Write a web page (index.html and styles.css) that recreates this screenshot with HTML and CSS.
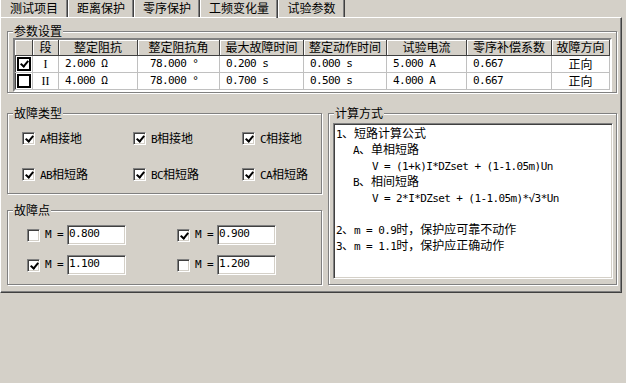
FILE: index.html
```html
<!DOCTYPE html>
<html lang="zh-CN">
<head>
    <meta charset="UTF-8">
    <title>工频变化量</title>
    <link rel="stylesheet" href="styles.css">
</head>
<body>
    <div class="tabs">
        <div class="tab w68">测试项目</div>
        <div class="tab w66">距离保护</div>
        <div class="tab w66">零序保护</div>
        <div class="tab w78 active">工频变化量</div>
        <div class="tab w67">试验参数</div>
    </div>

    <div class="panel">
        <div class="group params">
            <div class="group-title">参数设置</div>
            <div class="grid">
                <div class="th"></div>
                <div class="th">段</div>
                <div class="th">整定阻抗</div>
                <div class="th">整定阻抗角</div>
                <div class="th">最大故障时间</div>
                <div class="th">整定动作时间</div>
                <div class="th">试验电流</div>
                <div class="th">零序补偿系数</div>
                <div class="th">故障方向</div>

                <div class="td center"><span class="tcb on"></span></div>
                <div class="td center roman">I</div>
                <div class="td"><span class="en">2.000 Ω</span></div>
                <div class="td"><span class="en"> 78.000 °</span></div>
                <div class="td"><span class="en">0.200 s</span></div>
                <div class="td"><span class="en">0.000 s</span></div>
                <div class="td"><span class="en">5.000 A</span></div>
                <div class="td"><span class="en">0.667</span></div>
                <div class="td center">正向</div>

                <div class="td center"><span class="tcb"></span></div>
                <div class="td center roman">II</div>
                <div class="td"><span class="en">4.000 Ω</span></div>
                <div class="td"><span class="en"> 78.000 °</span></div>
                <div class="td"><span class="en">0.700 s</span></div>
                <div class="td"><span class="en">0.500 s</span></div>
                <div class="td"><span class="en">4.000 A</span></div>
                <div class="td"><span class="en">0.667</span></div>
                <div class="td center">正向</div>
            </div>
        </div>

        <div class="lower">
            <div class="left-col">
                <div class="group faults">
                    <div class="group-title">故障类型</div>
                    <label class="check"><span class="cb on"></span><span><span class="en">A</span>相接地</span></label>
                    <label class="check"><span class="cb on"></span><span><span class="en">B</span>相接地</span></label>
                    <label class="check"><span class="cb on"></span><span><span class="en">C</span>相接地</span></label>
                    <label class="check"><span class="cb on"></span><span><span class="en">AB</span>相短路</span></label>
                    <label class="check"><span class="cb on"></span><span><span class="en">BC</span>相短路</span></label>
                    <label class="check"><span class="cb on"></span><span><span class="en">CA</span>相短路</span></label>
                </div>

                <div class="group points">
                    <div class="group-title">故障点</div>
                    <div class="point"><span class="cb"></span><span class="en m">M =</span><span class="input en">0.800</span></div>
                    <div class="point"><span class="cb on"></span><span class="en m">M =</span><span class="input en">0.900</span></div>
                    <div class="point"><span class="cb on"></span><span class="en m">M =</span><span class="input en">1.100</span></div>
                    <div class="point"><span class="cb"></span><span class="en m">M =</span><span class="input en">1.200</span></div>
                </div>
            </div>

            <div class="group calc">
                <div class="group-title">计算方式</div>
                <div class="memo">
                    <div class="ln"><span class="en">1</span>、短路计算公式</div>
                    <div class="ln in1"><span class="en">A</span>、单相短路</div>
                    <div class="ln in2"><span class="en">V = (1+k)I*DZset + (1-1.05m)Un</span></div>
                    <div class="ln in1"><span class="en">B</span>、相间短路</div>
                    <div class="ln in2"><span class="en">V = 2*I*DZset + (1-1.05m)*√3*Un</span></div>
                    <div class="ln"></div>
                    <div class="ln"><span class="en">2</span>、<span class="en">m = 0.9</span>时，保护应可靠不动作</div>
                    <div class="ln"><span class="en">3</span>、<span class="en">m = 1.1</span>时，保护应正确动作</div>
                </div>
            </div>
        </div>
    </div>
</body>
</html>
```

FILE: styles.css
```css
* {
    box-sizing: border-box;
}

body {
    margin: 0;
    width: 626px;
    height: 383px;
    overflow: hidden;
    background-color: #D4D0C8;
    color: #000000;
    font-family: "Noto Sans CJK SC", sans-serif;
    font-size: 12px;
    line-height: 14px;
}

.en {
    font-family: "DejaVu Sans Mono", monospace;
    font-size: 11px;
    letter-spacing: -0.6px;
    white-space: pre;
}

/* tab strip */
.tabs {
    display: flex;
    height: 17px;
}

.tab {
    height: 17px;
    line-height: 16px;
    text-align: center;
    border-left: 1px solid #FFFFFF;
    border-right: 1px solid #404040;
    box-shadow: inset -1px 0 #808080;
}

.tab.active {
    position: relative;
    z-index: 1;
    height: 18px;
}

.w68 { width: 68px; }
.w66 { width: 66px; }
.w78 { width: 78px; }
.w67 { width: 67px; }

.panel {
    width: 622px;
    height: 276px;
    padding: 13px 0 0 6px;
    border-top: 1px solid #FFFFFF;
    border-left: 1px solid #FFFFFF;
    border-right: 1px solid #404040;
    border-bottom: 1px solid #404040;
    box-shadow: inset -1px -1px #808080;
}

/* etched group box */
.group {
    position: relative;
    border: 1px solid #808080;
    box-shadow: inset 1px 1px #FFFFFF, 1px 1px #FFFFFF;
}

.group-title {
    position: absolute;
    top: -8px;
    left: 5px;
    padding: 0 1px;
    line-height: 14px;
    background-color: #D4D0C8;
}

.params {
    width: 610px;
    height: 62px;
    padding: 6px 0 0 5px;
}

/* parameter grid */
.grid {
    display: grid;
    grid-template-columns: 18px 26px 79px 82px 84px 83px 80px 85px 58px;
    grid-template-rows: 16px 17px 17px;
    width: 599px;
    border: 2px solid;
    border-color: #808080 #FFFFFF #FFFFFF #808080;
    box-shadow: inset 1px 1px #404040;
    background-color: #FFFFFF;
}

.th {
    text-align: center;
    line-height: 14px;
    background-color: #D4D0C8;
    border-right: 1px solid #404040;
    border-bottom: 1px solid #404040;
    box-shadow: inset 1px 1px #FFFFFF;
}

.td {
    display: flex;
    align-items: center;
    padding-left: 6px;
    border-right: 1px solid #C0C0C0;
    border-bottom: 1px solid #C0C0C0;
}

.td.center {
    justify-content: center;
    padding-left: 0;
}

.roman {
    font-family: "Liberation Serif", serif;
    font-size: 12px;
}

.tcb {
    position: relative;
    width: 14px;
    height: 14px;
    border: 2px solid #000000;
    background-color: #FFFFFF;
}

.tcb.on::after {
    content: '';
    position: absolute;
    left: 3px;
    top: 0;
    width: 3px;
    height: 6px;
    border: solid #000000;
    border-width: 0 2px 2px 0;
    transform: rotate(40deg);
}

/* lower section */
.lower {
    display: flex;
    gap: 6px;
    margin-top: 20px;
}

.left-col {
    display: flex;
    flex-direction: column;
    gap: 16px;
}

.faults {
    width: 315px;
    height: 81px;
    padding: 18px 0 0 14px;
    display: grid;
    grid-template-columns: 111px 109px 1fr;
    grid-auto-rows: 13px;
    row-gap: 23px;
}

.check {
    display: flex;
    align-items: center;
    gap: 5px;
    white-space: nowrap;
}

.cb {
    position: relative;
    flex: none;
    width: 13px;
    height: 13px;
    border: 1px solid;
    border-color: #808080 #FFFFFF #FFFFFF #808080;
    box-shadow: inset 1px 1px #404040, inset -1px -1px #D4D0C8;
    background-color: #FFFFFF;
}

.cb.on::after {
    content: '';
    position: absolute;
    left: 4px;
    top: 1px;
    width: 3px;
    height: 6px;
    border: solid #000000;
    border-width: 0 2px 2px 0;
    transform: rotate(40deg);
}

.points {
    width: 315px;
    height: 75px;
    padding: 14px 0 0 19px;
    display: grid;
    grid-template-columns: 150px 1fr;
    grid-auto-rows: 20px;
    row-gap: 10px;
}

.point {
    display: flex;
    align-items: center;
}

.point .cb {
    margin-right: 5px;
}

.m {
    margin-right: 4px;
}

.input {
    width: 59px;
    height: 20px;
    padding-left: 1px;
    line-height: 16px;
    border: 1px solid;
    border-color: #808080 #FFFFFF #FFFFFF #808080;
    box-shadow: inset 1px 1px #404040, inset -1px -1px #D4D0C8;
    background-color: #FFFFFF;
}

.calc {
    width: 289px;
    height: 172px;
    padding: 9px 3px 5px 4px;
    display: flex;
}

.memo {
    flex: 1;
    padding: 1px 0 0 1px;
    border: 1px solid;
    border-color: #808080 #FFFFFF #FFFFFF #808080;
    box-shadow: inset 1px 1px #404040, inset -1px -1px #D4D0C8;
    background-color: #FFFFFF;
}

.ln {
    height: 16px;
    line-height: 16px;
    padding-left: 1px;
    white-space: nowrap;
}

.in1 {
    padding-left: 18px;
}

.in2 {
    padding-left: 37px;
}
```
